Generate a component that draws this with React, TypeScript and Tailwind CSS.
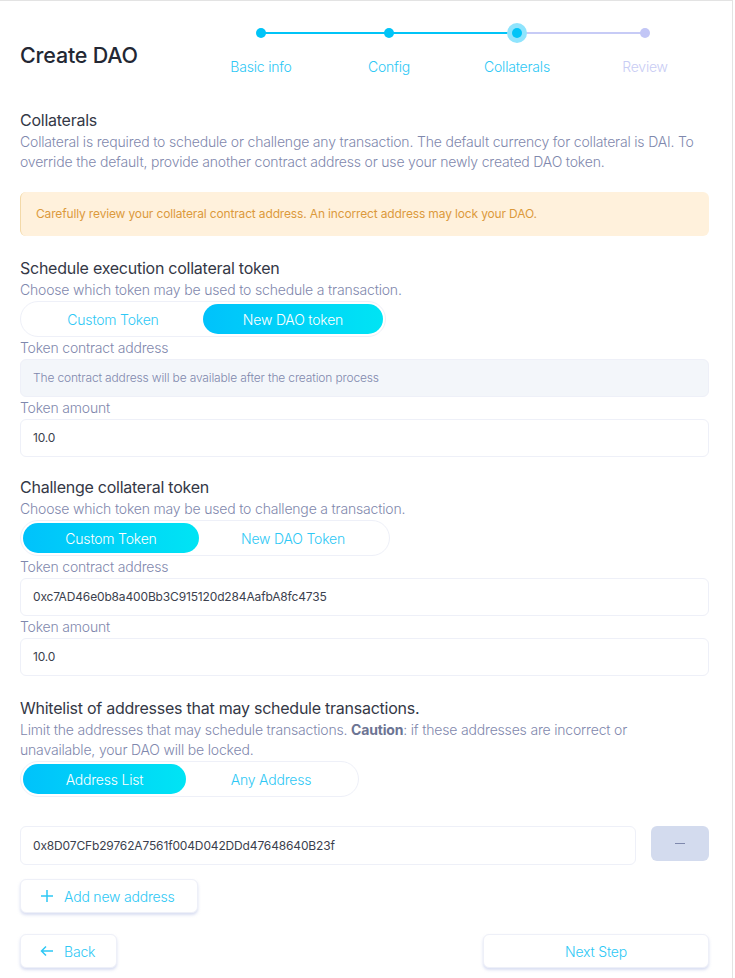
import React, { useState } from 'react';

const Stepper: React.FC = () => {
  const steps = ['Basic info', 'Config', 'Collaterals', 'Review'];
  const current = 2;
  return (
    <div className="relative w-[512px]">
      <div className="absolute left-[64px] top-[31px] h-[2px] w-[256px] bg-[#00c4f7]" />
      <div className="absolute left-[320px] top-[31px] h-[2px] w-[128px] bg-[#c7cbf6]" />
      <div className="grid grid-cols-4">
        {steps.map((s, i) => (
          <div key={s} className="flex flex-col items-center">
            <div className="relative z-10 flex h-[64px] items-center justify-center">
              {i === current && <div className="absolute h-[20px] w-[20px] rounded-full bg-[#8fe4fd]" />}
              <div className={`relative h-[10px] w-[10px] rounded-full ${i <= current ? 'bg-[#00c4f7]' : 'bg-[#c2c6f6]'}`} />
            </div>
            <span className={`text-[14px] font-light leading-[4px] tracking-[-0.2px] ${i <= current ? 'text-[#2ec8f5]' : 'text-[#c8ccf4]'}`}>{s}</span>
          </div>
        ))}
      </div>
    </div>
  );
};

const Toggle: React.FC<{ options: string[]; active: number; widths: string[]; onChange: (i: number) => void }> = ({ options, active, widths, onChange }) => (
  <div className="flex">
    <div className="inline-flex rounded-full border border-[#eef0f8] bg-white p-[2px]">
      {options.map((o, i) => (
        <button
          key={o}
          onClick={() => onChange(i)}
          className={`${widths[i]} h-[30px] rounded-full text-[14px] font-light tracking-[-0.2px] ${i === active ? 'bg-gradient-to-r from-[#00c2fb] to-[#00e4f4] text-white' : 'text-[#2ec8f5]'}`}
        >
          {o}
        </button>
      ))}
    </div>
  </div>
);

const Field: React.FC<{ label: string; value: string; disabled?: boolean }> = ({ label, value, disabled }) => (
  <div>
    <div className="text-[14px] font-light leading-[22px] tracking-[-0.2px] text-[#7f88ad]">{label}</div>
    <div className={`flex h-[38px] items-center rounded-[6px] border border-[#eef0f8] px-[12px] text-[12px] tracking-[-0.15px] ${disabled ? 'bg-[#f3f6fa] font-light text-[#7f88ad]' : 'bg-white text-[#3b3f4e]'}`}>
      {value}
    </div>
  </div>
);

const heading = 'text-[16px] leading-[24px] tracking-[-0.25px] text-[#343846]';
const desc = 'text-[14px] font-light leading-[20px] tracking-[-0.18px] text-[#7f88ad]';
const ghostBtn = 'h-[34px] rounded-[6px] border border-[#eef0f8] bg-white text-[14px] font-light tracking-[-0.2px] text-[#2ec8f5] shadow-[0_2px_3px_rgba(180,190,230,0.5)]';

export default function App() {
  const [schedule, setSchedule] = useState(1);
  const [challenge, setChallenge] = useState(0);
  const [whitelist, setWhitelist] = useState(0);

  return (
    <div className="min-h-[978px] w-[733px] border-r border-t border-[#e3e3e3] bg-white font-['Inter',sans-serif]">
      <div className="pb-[8px] pl-[20px] pr-[23px]">
        <div className="flex items-start">
          <h1 className="mt-[40px] w-[177px] text-[21.5px] font-medium leading-[28px] tracking-[-0.2px] text-[#232733]">Create DAO</h1>
          <Stepper />
        </div>

        <div className="mt-[39px]">
          <h2 className={heading}>Collaterals</h2>
          <p className={desc}>
            Collateral is required to schedule or challenge any transaction. The default currency for collateral is DAI. To override the default, provide another contract address or use your newly created DAO token.
          </p>
        </div>

        <div className="mt-[20px] flex h-[44px] items-center rounded-[6px] border-l border-[#f3d9a8] bg-[#fff1dc] px-[15px] text-[12px] tracking-[-0.15px] text-[#dc9a3c]">
          Carefully review your collateral contract address. An incorrect address may lock your DAO.
        </div>

        <section className="mt-[20px]">
          <h3 className={heading}>Schedule execution collateral token</h3>
          <p className={desc}>Choose which token may be used to schedule a transaction.</p>
          <div className="mt-[1px]">
            <Toggle options={['Custom Token', 'New DAO token']} active={schedule} widths={['w-[180px]', 'w-[180px]']} onChange={setSchedule} />
          </div>
          <Field label="Token contract address" value="The contract address will be available after the creation process" disabled />
          <Field label="Token amount" value="10.0" />
        </section>

        <section className="mt-[18px]">
          <h3 className={heading}>Challenge collateral token</h3>
          <p className={desc}>Choose which token may be used to challenge a transaction.</p>
          <div className="mt-[1px]">
            <Toggle options={['Custom Token', 'New DAO Token']} active={challenge} widths={['w-[176px]', 'w-[188px]']} onChange={setChallenge} />
          </div>
          <Field label="Token contract address" value="0xc7AD46e0b8a400Bb3C915120d284AafbA8fc4735" />
          <Field label="Token amount" value="10.0" />
        </section>

        <section className="mt-[20px]">
          <h3 className={heading}>Whitelist of addresses that may schedule transactions.</h3>
          <p className={desc}>
            Limit the addresses that may schedule transactions. <b className="font-bold text-[#6c7493]">Caution</b>: if these addresses are incorrect or
            <br />
            unavailable, your DAO will be locked.
          </p>
          <div className="mt-[1px]">
            <Toggle options={['Address List', 'Any Address']} active={whitelist} widths={['w-[163px]', 'w-[170px]']} onChange={setWhitelist} />
          </div>

          <div className="mt-[29px] flex items-start gap-[15px]">
            <div className="flex h-[39px] flex-1 items-center rounded-[6px] border border-[#eef0f8] px-[12px] text-[12px] tracking-[-0.15px] text-[#3b3f4e]">
              0x8D07CFb29762A7561f004D042DDd47648640B23f
            </div>
            <button className="flex h-[35px] w-[58px] items-center justify-center rounded-[6px] bg-[#d3dbee]">
              <span className="h-[1.5px] w-[10px] bg-[#7f89ad]" />
            </button>
          </div>

          <button className={`${ghostBtn} mt-[14px] flex w-[178px] items-center gap-[10px] pl-[19px]`}>
            <svg width="14" height="14" viewBox="0 0 14 14" fill="none" stroke="#2ec8f5" strokeWidth="1.5"><path d="M7 1v12M1 7h12" /></svg>
            Add new address
          </button>
        </section>

        <div className="mt-[21px] flex justify-between">
          <button className={`${ghostBtn} flex w-[97px] items-center gap-[10px] pl-[19px]`}>
            <svg width="14" height="12" viewBox="0 0 14 12" fill="none" stroke="#2ec8f5" strokeWidth="1.5"><path d="M13 6H1.5M6 1.5L1.5 6 6 10.5" /></svg>
            Back
          </button>
          <button className={`${ghostBtn} w-[226px]`}>Next Step</button>
        </div>
      </div>
    </div>
  );
}
